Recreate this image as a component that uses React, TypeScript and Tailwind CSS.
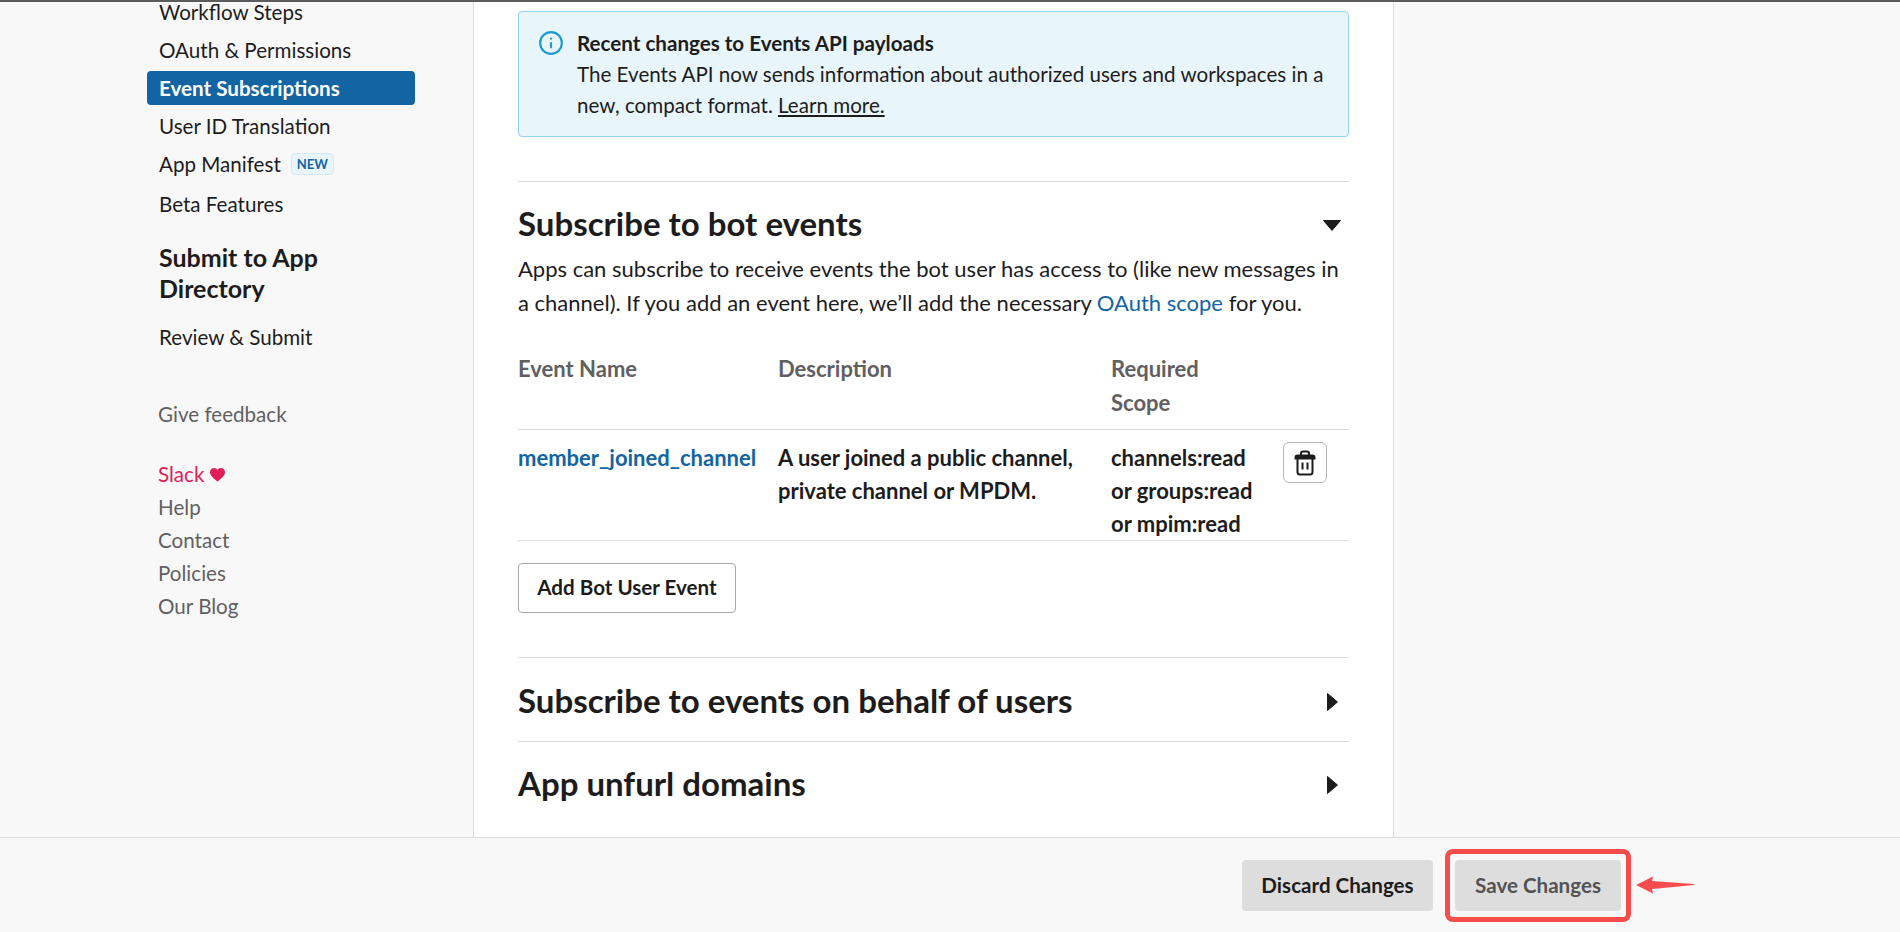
import { Info } from 'lucide-react'

const navItems = ['Workflow Steps', 'OAuth & Permissions']
const footerLinks = ['Help', 'Contact', 'Policies', 'Our Blog']

function TrashIcon() {
    return (
        <svg width="22" height="26" viewBox="0 0 22 26" fill="none" stroke="#1d1c1d" strokeWidth="2">
            <path d="M7 5V3.5C7 2.5 7.8 1.5 9 1.5H13C14.2 1.5 15 2.5 15 3.5V5" />
            <path d="M1.5 7.5C1.5 6 2.2 5.5 3.5 5.5H18.5C19.8 5.5 20.5 6 20.5 7.5V8.5H1.5Z" fill="#1d1c1d" />
            <path d="M3.5 8.5V22C3.5 23.5 4.5 24.5 6 24.5H16C17.5 24.5 18.5 23.5 18.5 22V8.5" />
            <path d="M8.5 12.5V19.5M13.5 12.5V19.5" />
        </svg>
    )
}

function Caret({ open }: { open?: boolean }) {
    if (open) {
        return (
            <svg width="18" height="11" viewBox="0 0 18 11" className="mr-[8px] mt-[2px]">
                <path d="M0.5 0.5H17.5L9 10.5Z" fill="#1d1c1d" stroke="#1d1c1d" strokeLinejoin="round" />
            </svg>
        )
    }
    return (
        <svg width="11" height="18" viewBox="0 0 11 18" className="mr-[11px] mt-[2px]">
            <path d="M0.5 0.5V17.5L10.5 9Z" fill="#1d1c1d" stroke="#1d1c1d" strokeLinejoin="round" />
        </svg>
    )
}

export default function App() {
    return (
        <div className="flex flex-col h-screen overflow-hidden bg-[#f8f8f8] text-[#1d1c1d] text-[20.6px] font-['Lato','Noto_Sans',sans-serif]">
            <div className="h-[2px] shrink-0 bg-[#5c5c5c]" />

            <div className="flex flex-1 min-h-0">
                {/* Sidebar */}
                <aside className="w-[474px] shrink-0 border-r border-[#dddddd] pl-[147px] pr-[58px] bg-[#f8f8f8]">
                    <nav className="flex flex-col">
                        {navItems.map((item) => (
                            <a key={item} className="h-[38px] flex items-center pl-3 first:-mt-[9px]">{item}</a>
                        ))}
                        <a className="h-[34px] my-[2px] flex items-center pl-3 rounded bg-[#1264a3] text-white font-bold">Event Subscriptions</a>
                        <a className="h-[38px] flex items-center pl-3">User ID Translation</a>
                        <a className="h-[38px] flex items-center pl-3 gap-[10px]">
                            App Manifest
                            <span className="text-[13px] leading-[20px] px-[5px] rounded border border-[#d3eaf6] bg-[#e8f5fa] text-[#1264a3] font-bold">NEW</span>
                        </a>
                        <a className="h-[38px] mt-[2px] flex items-center pl-3">Beta Features</a>
                    </nav>
                    <h3 className="mt-[19px] pl-3 text-[25px] leading-[31px] font-bold">Submit to App Directory</h3>
                    <a className="h-[38px] mt-[14px] flex items-center pl-3">Review &amp; Submit</a>

                    <div className="mt-[39px] pl-[11px] text-[#616061]">
                        <a className="block leading-[38px]">Give feedback</a>
                        <div className="mt-[25px] leading-[33px]">
                            <a className="flex items-center gap-[6px] text-[#e01e5a]">
                                Slack
                                <svg width="15" height="14" viewBox="0 0 15 14">
                                    <path d="M7.5 13.5C5 11.5 0 8 0 4.2C0 1.8 1.8 0 4 0C5.5 0 6.8 0.8 7.5 2C8.2 0.8 9.5 0 11 0C13.2 0 15 1.8 15 4.2C15 8 10 11.5 7.5 13.5Z" fill="#e01e5a" />
                                </svg>
                            </a>
                            {footerLinks.map((link) => (
                                <a key={link} className="block">{link}</a>
                            ))}
                        </div>
                    </div>
                </aside>

                {/* Main panel */}
                <main className="w-[920px] shrink-0 bg-white border-r border-[#dddddd] pl-[44px] pr-[44px] pt-[9px]">
                    <div className="flex gap-[13px] h-[126px] pl-[19px] pt-[16px] rounded border border-[#93d3ed] bg-[#e8f5fa]">
                        <Info className="w-[26px] h-[26px] mt-[2px] shrink-0 text-[#1d9bd1]" strokeWidth={2} />
                        <div className="leading-[31px]">
                            <p className="font-bold">Recent changes to Events API payloads</p>
                            <p>
                                The Events API now sends information about authorized users and workspaces in a<br />
                                new, compact format. <a className="underline">Learn more.</a>
                            </p>
                        </div>
                    </div>

                    <section className="mt-[44px] border-t border-[#dddddd]">
                        <div className="flex items-center justify-between h-[70px] pt-[14px]">
                            <h2 className="text-[33px] font-bold">Subscribe to bot events</h2>
                            <Caret open />
                        </div>
                        <p className="text-[22px] leading-[34px]">
                            Apps can subscribe to receive events the bot user has access to (like new messages in<br />
                            a channel). If you add an event here, we’ll add the necessary <a className="text-[#1264a3]">OAuth scope</a> for you.
                        </p>

                        <div className="mt-[32px] grid grid-cols-[260px_333px_172px_66px] text-[22px]">
                            <div className="h-[78px] font-bold text-[#616061] border-b border-[#dddddd] leading-[33px]">Event Name</div>
                            <div className="h-[78px] font-bold text-[#616061] border-b border-[#dddddd] leading-[33px]">Description</div>
                            <div className="h-[78px] font-bold text-[#616061] border-b border-[#dddddd] leading-[34px] col-span-2">Required<br />Scope</div>

                            <div className="h-[111px] pt-[11px] leading-[33px] font-bold text-[#1264a3] border-b border-[#dddddd]">member_joined_channel</div>
                            <div className="h-[111px] pt-[11px] leading-[33px] font-bold border-b border-[#dddddd]">A user joined a public channel,<br />private channel or MPDM.</div>
                            <div className="h-[111px] pt-[11px] leading-[33px] font-bold border-b border-[#dddddd]">channels:read<br />or groups:read<br />or mpim:read</div>
                            <div className="h-[111px] pt-[12px] border-b border-[#dddddd]">
                                <button className="w-[44px] h-[41px] flex items-center justify-center rounded-md border border-[#b5b5b5] bg-white">
                                    <TrashIcon />
                                </button>
                            </div>
                        </div>

                        <button className="mt-[22px] w-[218px] h-[50px] pb-[2px] rounded border border-[#a8a8a8] bg-white font-bold">Add Bot User Event</button>
                    </section>

                    <section className="mt-[44px] border-t border-[#dddddd] h-[84px] pt-[3px] flex items-center justify-between">
                        <h2 className="text-[33px] font-bold">Subscribe to events on behalf of users</h2>
                        <Caret />
                    </section>
                    <section className="border-t border-[#dddddd] h-[84px] pt-[1px] flex items-center justify-between">
                        <h2 className="text-[33px] font-bold">App unfurl domains</h2>
                        <Caret />
                    </section>
                </main>
            </div>

            {/* Save bar */}
            <footer className="h-[95px] shrink-0 border-t border-[#dddddd] bg-[#f8f8f8] flex items-center justify-end pr-[269px] relative">
                <button className="w-[191px] h-[51px] rounded bg-[#dddddd] font-bold">Discard Changes</button>
                <div className="ml-[12px] px-[5px] py-[6px] rounded-lg border-[5px] border-[#f74c4c]">
                    <button className="block w-[166px] h-[51px] rounded bg-[#dddddd] font-bold text-[#535353]">Save Changes</button>
                </div>
                <svg width="58" height="18" viewBox="0 0 58 18" className="absolute left-[1636px] top-[38px]">
                    <path d="M0 9L17 0.5L16 5L58 8V9L16 13L17 17.5Z" fill="#f74c4c" />
                </svg>
            </footer>
        </div>
    )
}
